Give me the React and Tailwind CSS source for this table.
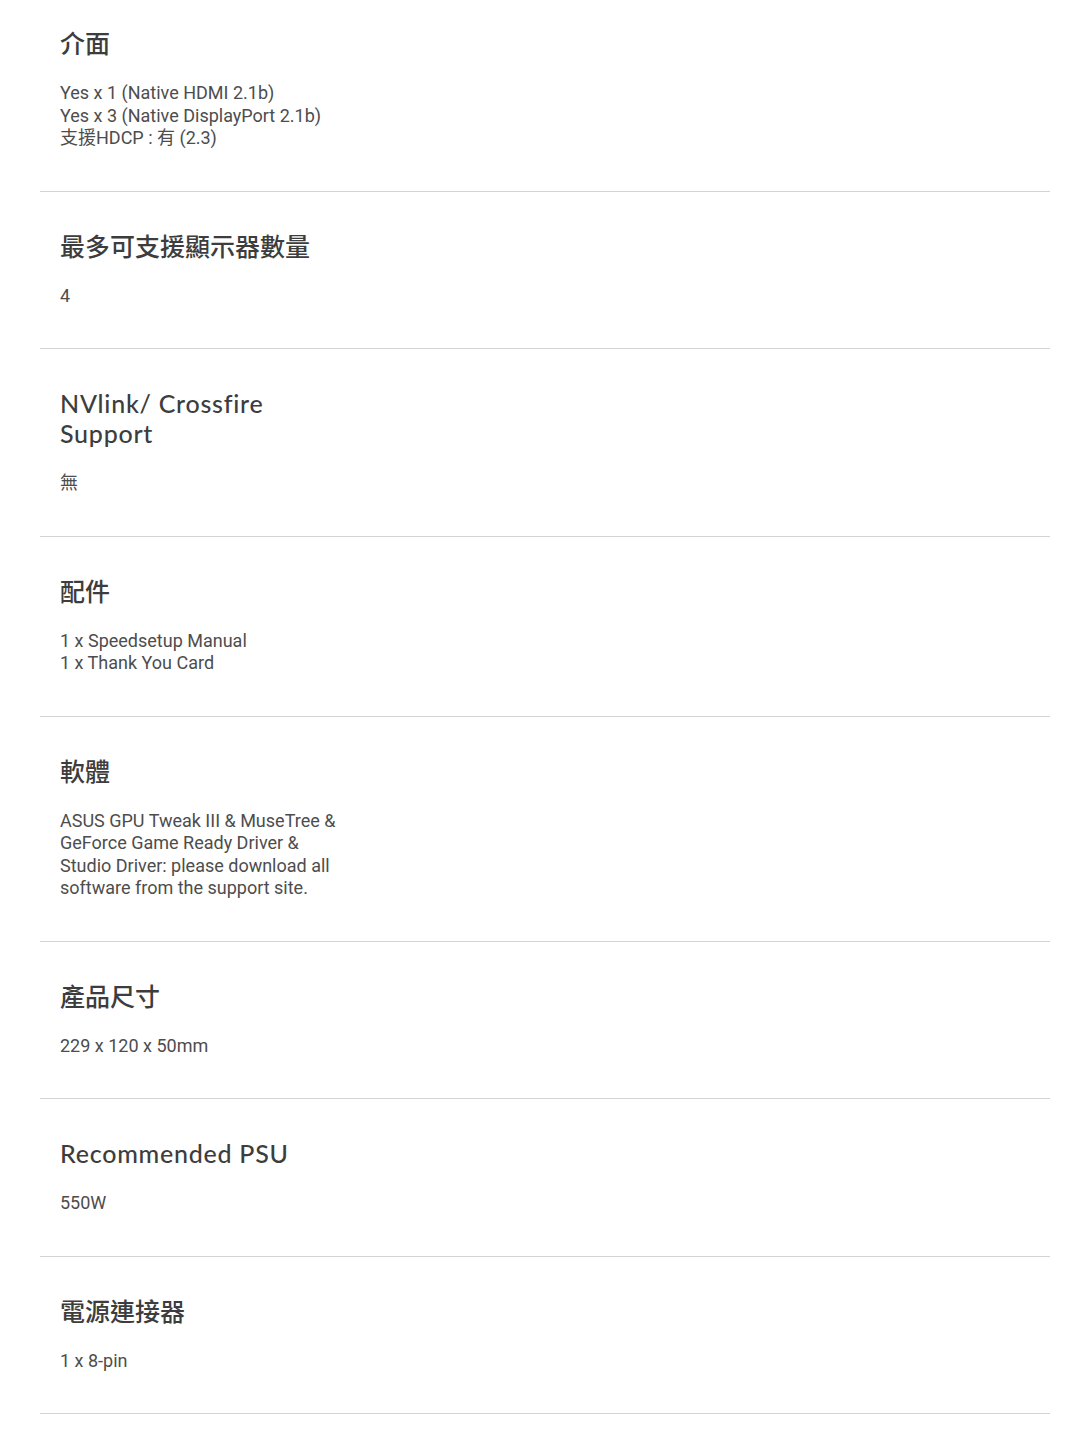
import React from "react";

const specs = [
  {
    title: "介面",
    lines: ["Yes x 1 (Native HDMI 2.1b)", "Yes x 3 (Native DisplayPort 2.1b)", "支援HDCP : 有 (2.3)"],
  },
  { title: "最多可支援顯示器數量", lines: ["4"] },
  { title: "NVlink/ Crossfire Support", lines: ["無"] },
  { title: "配件", lines: ["1 x Speedsetup Manual", "1 x Thank You Card"] },
  {
    title: "軟體",
    lines: [
      "ASUS GPU Tweak III & MuseTree & GeForce Game Ready Driver & Studio Driver: please download all software from the support site.",
    ],
  },
  { title: "產品尺寸", lines: ["229 x 120 x 50mm"] },
  { title: "Recommended PSU", lines: ["550W"] },
  { title: "電源連接器", lines: ["1 x 8-pin"] },
];

// latin headings get a bit of tracking to match the wider brand font
const isLatin = (str) => /^[\x00-\x7F]+$/.test(str);

const SpecRow = ({ title, lines, first }) => (
  <div className={`border-b border-[#d4d4d4] pl-5 pb-[41px] ${first ? "pt-[28px]" : "pt-[39px]"}`}>
    <h3
      className={`w-[270px] text-[25px] leading-[30px] font-medium text-[#3d3d3d] ${
        isLatin(title) ? "tracking-[0.03em]" : "tracking-normal"
      }`}
      style={{ fontFamily: '"Lato", "Noto Sans CJK TC", sans-serif' }}
    >
      {title}
    </h3>
    <div
      className="mt-6 w-[285px] text-[18px] leading-[22.5px] text-[#4d4d4d]"
      style={{ fontFamily: '"Roboto", "Noto Sans CJK TC", sans-serif' }}
    >
      {lines.map((line, i) => (
        <p key={i}>{line}</p>
      ))}
    </div>
  </div>
);

export default function App() {
  return (
    <div className="min-h-screen bg-white">
      <div className="ml-10 mr-[17px]">
        {specs.map((s, i) => (
          <SpecRow key={s.title} {...s} first={i === 0} />
        ))}
      </div>
    </div>
  );
}
